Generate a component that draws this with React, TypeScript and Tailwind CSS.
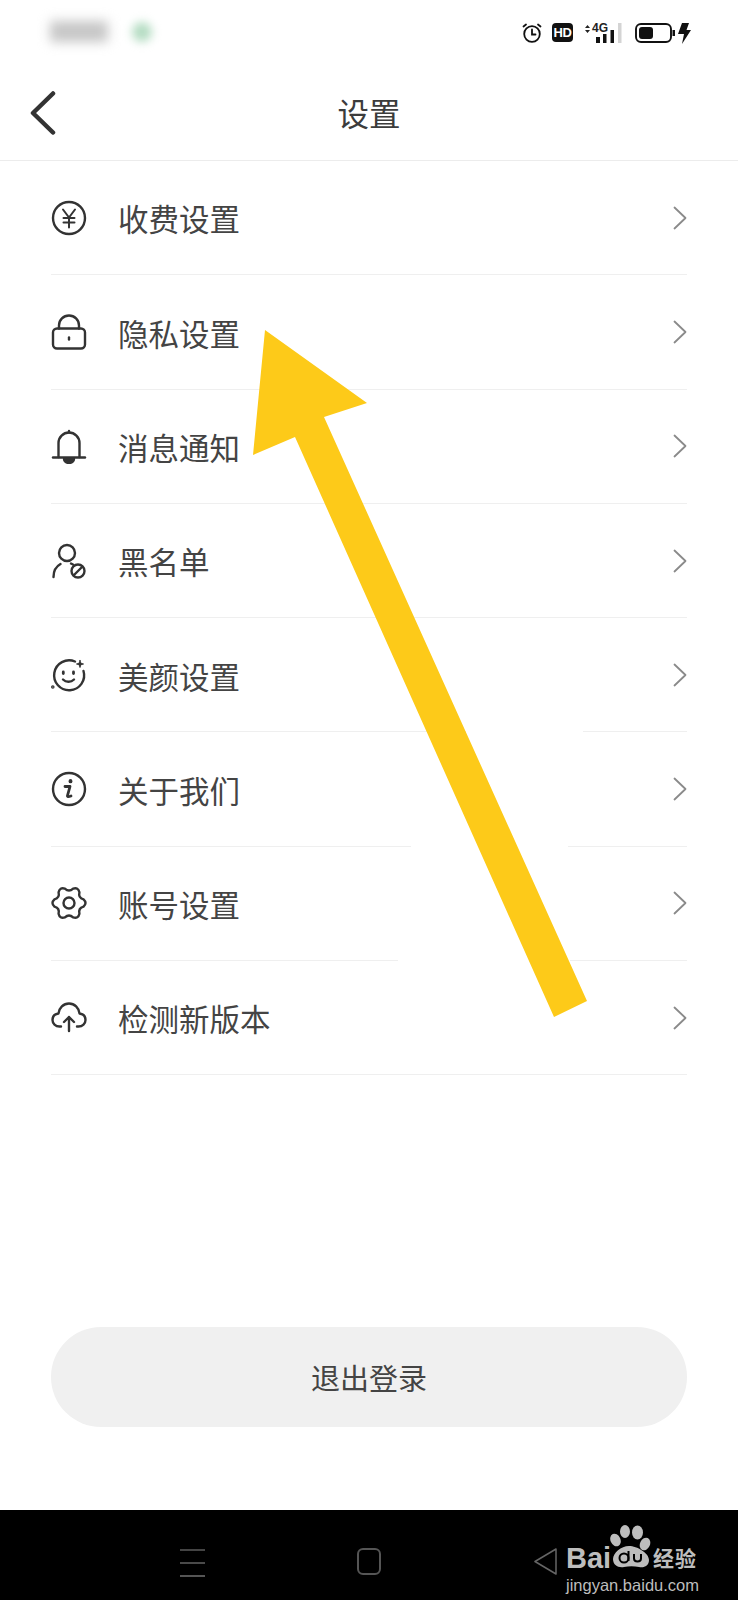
import type { ReactNode } from "react";

const CJK = "font-['Noto_Sans_CJK_SC','Noto_Sans',sans-serif]";

function Icon({ children }: { children: ReactNode }) {
  return (
    <svg viewBox="0 0 36 36" fill="none" stroke="#333" strokeWidth="2.4" strokeLinecap="round" strokeLinejoin="round" className="w-9 h-9 shrink-0">
      {children}
    </svg>
  );
}

// six rounded lobes with soft notches between them
function gearPath() {
  const pt = (deg: number, r: number) => {
    const a = (deg * Math.PI) / 180;
    return `${(18 + r * Math.cos(a)).toFixed(2)} ${(18 + r * Math.sin(a)).toFixed(2)}`;
  };
  let d = `M${pt(-14, 15)}`;
  for (let i = 0; i < 6; i++) {
    const a = i * 60;
    d += ` Q${pt(a, 18.5)} ${pt(a + 14, 15)} Q${pt(a + 30, 10.5)} ${pt(a + 46, 15)}`;
  }
  return d + "z";
}

const rows: { label: string; icon: ReactNode }[] = [
  {
    label: "收费设置",
    icon: (
      <Icon>
        <circle cx="18" cy="18" r="16" />
        <path d="M12 9.500 18 17.500l6-8M18 17.500v10M12.500 18h11M12.500 22.500h11" strokeWidth="2" />
      </Icon>
    ),
  },
  {
    label: "隐私设置",
    icon: (
      <Icon>
        <rect x="2" y="14.500" width="32" height="20" rx="4" />
        <path d="M8 14.500v-3a10 10 0 0 1 20 0v3" />
        <path d="M18 23.500v2" />
      </Icon>
    ),
  },
  {
    label: "消息通知",
    icon: (
      <Icon>
        <path d="M7.500 29V15a10.500 10.500 0 0 1 21 0v14" />
        <path d="M2 29.500h32" />
        <path d="M13 31h10a5 4 0 0 1-10 0z" fill="#333" />
        <path d="M18 3v1.500" />
      </Icon>
    ),
  },
  {
    label: "黑名单",
    icon: (
      <Icon>
        <circle cx="16" cy="10" r="8" />
        <path d="M2.500 34c0-6 2.500-10.500 7-13" />
        <path d="M22 21.500c-1-.5-1.500-.7-2-1" />
        <circle cx="27" cy="28" r="6.500" />
        <path d="m23 32 8-8" />
      </Icon>
    ),
  },
  {
    label: "美颜设置",
    icon: (
      <Icon>
        <path d="M24 4.500A15 15 0 1 0 32.500 14" />
        <path d="M12.300 15v1.500M22.500 15v1.500" strokeWidth="2.800" />
        <path d="M12 22.500c3 3 8 3 11 0" />
        <path d="M29 3.500c.3 2.500 1 3.200 3.500 3.500-2.500.3-3.200 1-3.500 3.500-.3-2.500-1-3.200-3.500-3.500 2.500-.3 3.200-1 3.500-3.500z" fill="#333" strokeWidth="1" />
        <circle cx="1.800" cy="30" r=".6" fill="#333" />
      </Icon>
    ),
  },
  {
    label: "关于我们",
    icon: (
      <Icon>
        <circle cx="18" cy="18" r="16" />
        <path d="M14 15.500h5l-2.500 9c-.3 1.300.5 1.700 3.500.5" strokeWidth="2.800" />
        <path d="M19.500 10v.4" strokeWidth="3.800" />
      </Icon>
    ),
  },
  {
    label: "账号设置",
    icon: (
      <Icon>
        <path d={gearPath()} />
        <circle cx="18" cy="18" r="5.500" />
      </Icon>
    ),
  },
  {
    label: "检测新版本",
    icon: (
      <Icon>
        <path d="M10 26.500H8.500C4.500 26.500 1.500 23.500 1.500 20 1.500 16.500 4 14 7.500 13.500 8 8 12.500 3.500 18 3.500s10 4.500 10.500 10c3.500.5 6 3 6 6.500s-3 6.500-7 6.500H26" />
        <path d="M18 31V17M13 22l5-5 5 5" />
      </Icon>
    ),
  },
];

function StatusBar() {
  return (
    <div className="relative h-[66px] shrink-0 flex items-start pt-[23px] pl-[522px]">
      <div className="absolute left-[50px] top-[21px] w-[58px] h-[21px] bg-[#c6c6c6] blur-[6px]" />
      <div className="absolute left-[132px] top-[22px] w-[20px] h-[20px] rounded-full bg-[#b4dcc2] blur-[5px]" />
      {/* alarm */}
      <svg viewBox="0 0 20 20" fill="none" stroke="#111" strokeWidth="1.800" strokeLinecap="round" className="w-5 h-5 shrink-0">
        <circle cx="10" cy="11" r="7.800" />
        <path d="M10 6.500V11.500H13.500M1.500 3.500 4 1.500M18.500 3.500 16 1.500" />
      </svg>
      <div className="ml-[10px] w-[21px] h-[19px] rounded-[4px] bg-[#111] text-white font-['Liberation_Sans',sans-serif] font-bold text-[13px] tracking-[-0.5px] leading-[19px] text-center shrink-0">
        HD
      </div>
      {/* signal */}
      <div className="relative ml-[11px] w-[38px] h-[20px] shrink-0">
        <span className="absolute left-[8px] -top-[2px] font-['Liberation_Sans',sans-serif] font-bold text-[12px] leading-[14px] text-[#222]">4G</span>
        <svg viewBox="0 0 38 20" className="absolute inset-0 w-[38px] h-[20px]">
          <path d="M1 5 3.500 2 6 5zM1 7l2.500 3L6 7z" fill="#222" />
          <rect x="12" y="14" width="4" height="6" fill="#111" />
          <rect x="19" y="11" width="3.500" height="9" fill="#111" />
          <rect x="26.500" y="7" width="3.500" height="13" fill="#111" />
          <rect x="34" y="0" width="3.500" height="20" fill="#d4d4d4" />
        </svg>
      </div>
      {/* battery */}
      <svg viewBox="0 0 40 20" className="ml-[13px] w-[40px] h-[20px] shrink-0">
        <rect x="1" y="1" width="35" height="18" rx="5" fill="none" stroke="#111" strokeWidth="1.900" />
        <rect x="4" y="4" width="14" height="12" rx="3" fill="#111" />
        <rect x="37.500" y="7" width="2.500" height="6" fill="#111" />
      </svg>
      <svg viewBox="0 0 13 21" className="ml-[3px] w-[13px] h-[21px] shrink-0">
        <path d="M4 0h7L8.500 7H13L4 21l2-10H0z" fill="#111" />
      </svg>
    </div>
  );
}

function NavBar() {
  return (
    <div className="relative mt-auto h-[90px] bg-black flex items-start pt-[38px] pl-[180px] shrink-0">
      <div className="flex flex-col gap-[11px] w-[25px] pt-px shrink-0">
        <div className="h-[2px] bg-[#444]" />
        <div className="h-[2px] bg-[#4a4a4a]" />
        <div className="h-[2px] bg-[#555]" />
      </div>
      <div className="ml-[152px] w-[24px] h-[27px] rounded-[6px] border-2 border-[#555] shrink-0" />
      <svg viewBox="0 0 23 27" fill="none" stroke="#666" strokeWidth="1.500" strokeLinejoin="round" className="ml-[153px] w-[23px] h-[27px] shrink-0">
        <path d="M22 1 1 13.500 22 26z" />
      </svg>
      {/* watermark */}
      <div className="absolute left-[566px] top-[15px] w-[134px] h-[72px] text-[#bdbdbd]">
        <span className="absolute left-0 top-[17px] font-['Liberation_Sans',sans-serif] font-bold text-[29px] leading-[32px]">Bai</span>
        <svg viewBox="0 0 42 44" className="absolute left-[44px] top-0 w-[42px] h-[44px]">
          <g fill="#bdbdbd">
            <ellipse cx="5.500" cy="15" rx="5" ry="6.500" transform="rotate(-25 5.500 15)" />
            <ellipse cx="15" cy="6.500" rx="5" ry="6.500" />
            <ellipse cx="27.500" cy="7.500" rx="5.500" ry="7" />
            <ellipse cx="35" cy="19" rx="5" ry="6.500" transform="rotate(25 35 19)" />
            <path d="M3 34c0-6 8-13 16-13s20 7 20 14c0 6-5 8-10 7-5-1-10-1-15 0-6 1-11-2-11-8z" />
          </g>
          <circle cx="14" cy="33" r="4.500" fill="none" stroke="#000" strokeWidth="2" />
          <path d="M18.500 26v10M24 29v4.500c0 4 7 4 7 0V29" fill="none" stroke="#000" strokeWidth="2" />
        </svg>
        <span className={`absolute left-[87px] top-[19px] text-[21px] leading-[26px] font-bold tracking-[1px] ${CJK}`}>经验</span>
        <span className="absolute left-0 top-[49px] font-['Liberation_Sans',sans-serif] text-[16.5px] leading-[22px] whitespace-nowrap">jingyan.baidu.com</span>
      </div>
    </div>
  );
}

export default function App() {
  return (
    <div className={`relative w-[738px] h-[1600px] bg-white flex flex-col overflow-hidden text-[#333] ${CJK}`}>
      <StatusBar />

      <div className="relative h-[95px] shrink-0 flex items-center justify-center border-b border-[#ececec]">
        <svg viewBox="0 0 26 44" fill="none" stroke="#333" strokeWidth="4.500" strokeLinecap="round" strokeLinejoin="round" className="absolute left-[30px] top-[25px] w-[26px] h-[44px]">
          <path d="M23 2.500 3 22l20 19.500" />
        </svg>
        <span className="text-[31.5px] leading-none text-[#3c3c3c]">设置</span>
      </div>

      <div className="px-[51px]">
        {rows.map((row) => (
          <div key={row.label} className="h-[114.3px] flex items-center border-b border-[#efefef]">
            {row.icon}
            <span className="ml-[31px] pt-[2px] text-[30.5px] leading-none text-[#444]">{row.label}</span>
            <svg viewBox="0 0 14 24" fill="none" stroke="#8a8a8a" strokeWidth="1.800" strokeLinecap="round" strokeLinejoin="round" className="ml-auto w-[14px] h-[24px] shrink-0">
              <path d="m1.500 1.500 11 10.500-11 10.500" />
            </svg>
          </div>
        ))}
      </div>

      <div className="mx-[51px] mt-[252px] h-[100px] rounded-[50px] bg-[#f0f0f0] flex items-center justify-center text-[29px] text-[#444]">
        退出登录
      </div>

      <NavBar />

      {/* annotation arrow, with the erased bits of the rules beside it */}
      <svg viewBox="0 0 738 1600" className="absolute inset-0 w-[738px] h-[1600px] pointer-events-none">
        <path d="M466 730.500h117v3H466zM411 845h157v3H411zM398 959.500h172v3H398z" fill="#fff" />
        <path d="M265 330 367 403 324 417 587 1001 554 1017 295 437 253 455z" fill="#fdca19" />
      </svg>
    </div>
  );
}
